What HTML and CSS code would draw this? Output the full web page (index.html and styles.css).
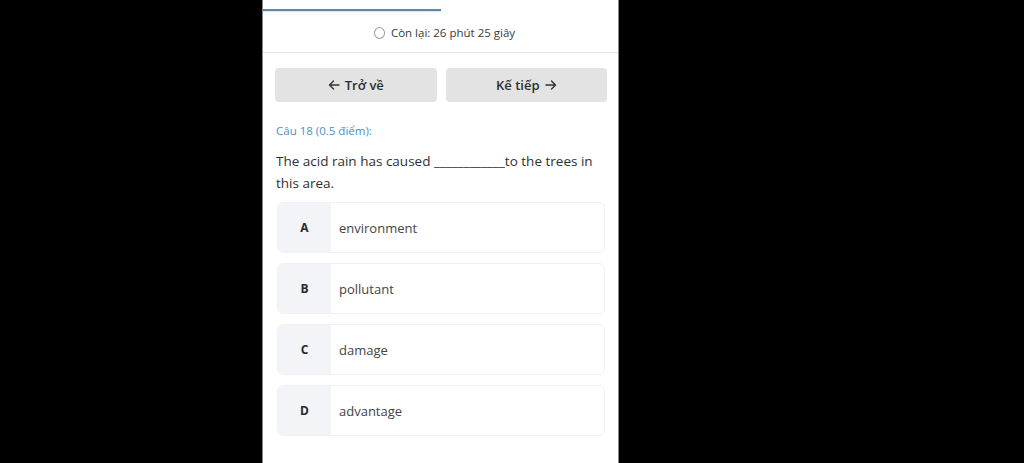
FILE: index.html
```html
<!DOCTYPE html>
<html lang="vi">
<head>
    <meta charset="UTF-8">
    <meta name="viewport" content="width=device-width, initial-scale=1.0">
    <title>Bài thi - Câu 18</title>
    <link rel="stylesheet" href="styles.css">
</head>
<body>
    <div class="quiz-panel">
        <div class="progress">
            <div class="progress-fill"></div>
        </div>

        <div class="timer">
            <span class="timer-icon"></span>
            <span>Còn lại: 26 phút 25 giây</span>
        </div>

        <div class="nav-buttons">
            <button type="button" class="btn">
                <svg class="arrow" viewBox="0 0 12 12"><path d="M11 6H1.5M5.5 2L1.5 6l4 4"/></svg>
                Trở về
            </button>
            <button type="button" class="btn">
                Kế tiếp
                <svg class="arrow" viewBox="0 0 12 12"><path d="M1 6h9.5M6.5 2l4 4-4 4"/></svg>
            </button>
        </div>

        <div class="question">
            <div class="question-label">Câu 18 (0.5 điểm):</div>
            <p class="question-text">The acid rain has caused ____________to the trees in this area.</p>

            <ul class="options">
                <li class="option"><span class="option-key">A</span><span class="option-text">environment</span></li>
                <li class="option"><span class="option-key">B</span><span class="option-text">pollutant</span></li>
                <li class="option"><span class="option-key">C</span><span class="option-text">damage</span></li>
                <li class="option"><span class="option-key">D</span><span class="option-text">advantage</span></li>
            </ul>
        </div>
    </div>
</body>
</html>
```

FILE: styles.css
```css
:root {
    --primary-color: #4a90c8;
    --bar-color: #5b86a8;
    --text-color: #333333;
    --muted-bg: #e3e3e3;
    --key-bg: #f3f4f8;
    --border-color: #f1f1f3;
}

* {
    margin: 0;
    padding: 0;
    box-sizing: border-box;
}

body {
    font-family: 'Open Sans', 'Noto Sans', sans-serif;
    color: var(--text-color);
    background-color: #000;
    padding-left: 262px;
    height: 463px;
    overflow: hidden;
}

.quiz-panel {
    width: 357px;
    height: 463px;
    background-color: white;
    border-left: 1px solid #8a8a8a;
    border-right: 1px solid #8a8a8a;
}

.progress {
    height: 13px;
    padding-top: 9px;
}

.progress-fill {
    width: 50%;
    height: 2px;
    background-color: var(--bar-color);
    box-shadow: 0 1px 0 #dfe6ec;
}

.timer {
    height: 40px;
    display: flex;
    align-items: center;
    justify-content: center;
    gap: 6px;
    font-size: 11.5px;
    color: #3a3a3a;
    border-bottom: 1px solid #e2e2e2;
    padding-left: 8px;
}

.timer-icon {
    width: 11px;
    height: 12px;
    border: 1.5px solid #9a9a9a;
    border-radius: 50%;
}

.nav-buttons {
    display: flex;
    gap: 9px;
    padding: 15px 11px 0 12px;
}

.btn {
    flex: 1;
    height: 34px;
    border: none;
    border-radius: 4px;
    background-color: var(--muted-bg);
    font-family: inherit;
    font-size: 13px;
    font-weight: 600;
    color: #2e2e2e;
    display: flex;
    align-items: center;
    justify-content: center;
    gap: 5px;
}

.arrow {
    width: 12px;
    height: 12px;
    fill: none;
    stroke: #333;
    stroke-width: 1.4;
    stroke-linecap: round;
    stroke-linejoin: round;
}

.question {
    padding: 21px 12px 0 13px;
}

.question-label {
    font-size: 11.5px;
    color: var(--primary-color);
    margin-bottom: 12px;
}

.question-text {
    font-size: 13.5px;
    line-height: 22px;
    color: #2f2f2f;
    padding-right: 4px;
    margin-bottom: 8px;
}

.options {
    list-style: none;
    display: flex;
    flex-direction: column;
    gap: 10px;
    padding: 0 1px;
}

.option {
    display: flex;
    height: 51px;
    border: 1px solid var(--border-color);
    border-radius: 6px;
    overflow: hidden;
    font-size: 13px;
}

.option-key {
    width: 53px;
    background-color: var(--key-bg);
    display: flex;
    align-items: center;
    justify-content: center;
    font-weight: 700;
    font-size: 12px;
    color: #2a2a2a;
}

.option-text {
    display: flex;
    align-items: center;
    padding-left: 8px;
    color: #444;
}
```
